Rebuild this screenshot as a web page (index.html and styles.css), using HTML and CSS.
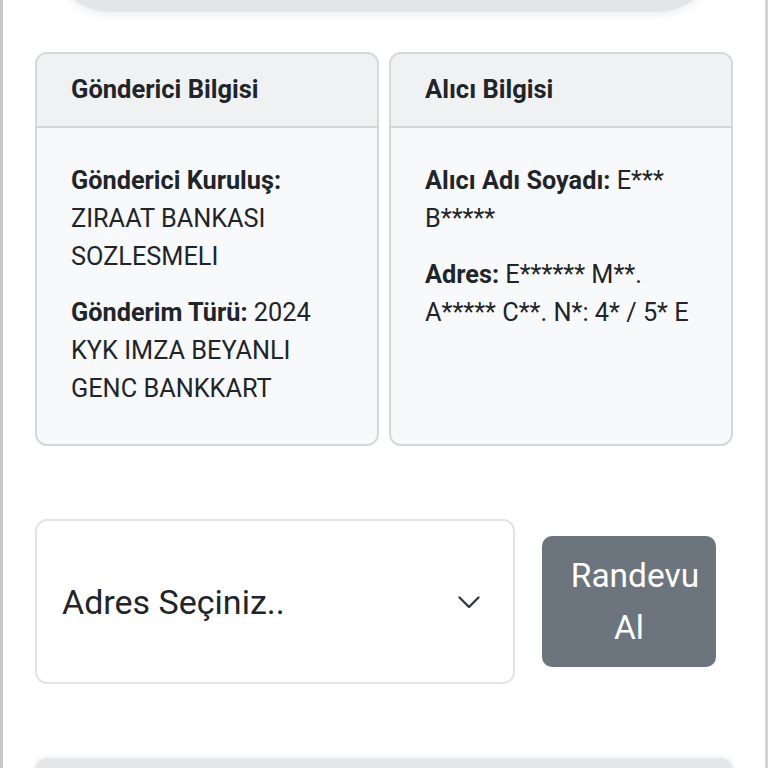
FILE: index.html
```html
<!DOCTYPE html>
<html lang="tr">
<head>
<meta charset="utf-8">
<link rel="stylesheet" href="styles.css">
</head>
<body>
<div class="page">
  <div class="top-pill"></div>
  <div class="cards">
    <div class="card">
      <div class="card-header">Gönderici Bilgisi</div>
      <div class="card-body">
        <p><b>Gönderici Kuruluş:</b> ZIRAAT BANKASI SOZLESMELI</p>
        <p><b>Gönderim Türü:</b> 2024 KYK IMZA BEYANLI GENC BANKKART</p>
      </div>
    </div>
    <div class="card">
      <div class="card-header">Alıcı Bilgisi</div>
      <div class="card-body">
        <p><b>Alıcı Adı Soyadı:</b> E*** B*****</p>
        <p><b>Adres:</b> E****** M**. A***** C**. N*: 4* / 5* E</p>
      </div>
    </div>
  </div>
  <div class="action-row">
    <div class="select">
      <span>Adres Seçiniz..</span>
      <svg class="chev" width="24" height="14" viewBox="0 0 24 14"><path d="M2.5 2.5l9.5 9.5 9.5-9.5" fill="none" stroke="#343a40" stroke-width="2.4" stroke-linecap="round" stroke-linejoin="round"/></svg>
    </div>
    <button class="btn">Randevu Al</button>
  </div>
  <div class="bottom-panel"></div>
</div>
</body>
</html>
```
FILE: styles.css
```css
html, body {
  margin: 0;
  padding: 0;
  background: #ffffff;
}
body {
  font-family: Roboto, "Liberation Sans", sans-serif;
  color: #212529;
}
.page {
  box-sizing: border-box;
  width: 768px;
  height: 768px;
  overflow: hidden;
  border-left: 3px solid #c9c9c9;
  border-right: 3px solid #d2d2d2;
  padding: 0 32px;
}
.top-pill {
  height: 72px;
  margin: -60px 16px 0 15px;
  background: #e4e5e7;
  border-radius: 0 0 60px 60px;
  box-shadow: 0 4px 8px rgba(0,0,0,0.06);
}
.cards {
  display: flex;
  gap: 10px;
  margin-top: 40px;
}
.card {
  flex: 1;
  border: 2px solid #d6d7d9;
  border-radius: 12px;
  background: #f8f9fa;
  overflow: hidden;
}
.card-header {
  background: #f0f1f3;
  border-bottom: 2px solid #d6d7d9;
  font-weight: 700;
  font-size: 25.5px;
  line-height: 36px;
  padding: 17px 34px 19px 34px;
}
.card-body {
  padding: 34px 32px 36px 34px;
  font-size: 25.3px;
  line-height: 38px;
}
.card-body p {
  margin: 0 0 18px 0;
}
.card-body p:last-child {
  margin-bottom: 0;
}
.card-body b {
  font-weight: 700;
}
.action-row {
  display: flex;
  align-items: center;
  gap: 27px;
  margin-top: 73px;
}
.select {
  box-sizing: border-box;
  width: 480px;
  height: 165px;
  border: 2px solid #e1e3e5;
  border-radius: 12px;
  background: #fff;
  display: flex;
  align-items: center;
  justify-content: space-between;
  padding: 0 32px 0 25px;
  font-size: 34px;
  color: #212529;
}
.chev {
  display: block;
}
.btn {
  box-sizing: border-box;
  width: 174px;
  height: 131px;
  border: 0;
  border-radius: 10px;
  background: #6c757d;
  color: #fff;
  font-family: Roboto, "Liberation Sans", sans-serif;
  font-size: 33.5px;
  line-height: 52px;
  padding: 13px 14px;
  text-align: center;
  text-indent: 12px;
}
.bottom-panel {
  margin-top: 74px;
  height: 40px;
  background: #e6e7e9;
  border-radius: 12px 12px 0 0;
  box-shadow: 0 -2px 6px rgba(0,0,0,0.05);
}
```
